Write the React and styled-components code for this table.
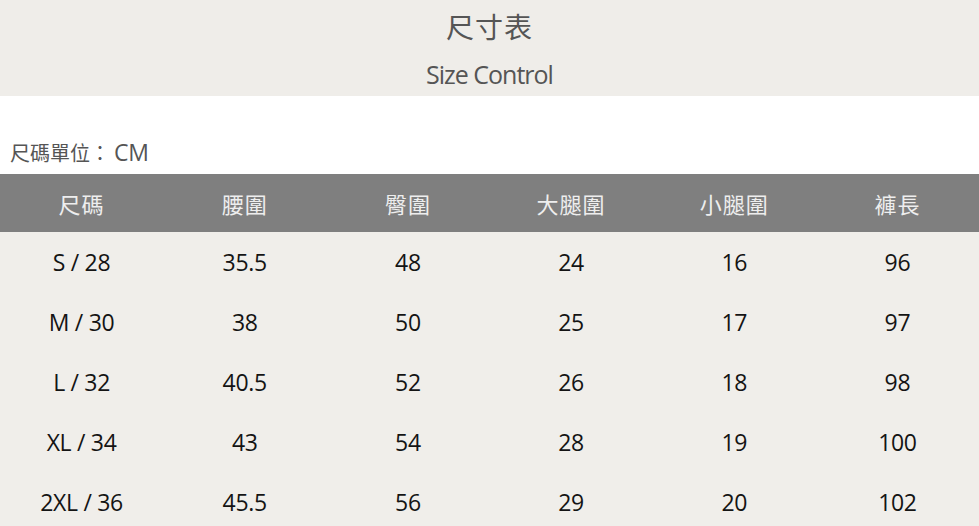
import styled, { createGlobalStyle } from "styled-components";

const GlobalStyle = createGlobalStyle`
  html, body {
    margin: 0;
    padding: 0;
    background: #ffffff;
  }
  body {
    font-family: "Open Sans", "Noto Sans CJK TC", sans-serif;
    overflow: hidden;
  }
`;

const Page = styled.div`
  width: 979px;
  display: flex;
  flex-direction: column;
`;

const Banner = styled.header`
  height: 96px;
  background: #efede9;
  display: flex;
  flex-direction: column;
  align-items: center;
  color: #555555;
`;

const Title = styled.h1`
  margin: 7px 0 0;
  font-family: "Noto Sans CJK TC", sans-serif;
  font-weight: 400;
  font-size: 28px;
  line-height: 38px;
  letter-spacing: 1px;
`;

const Subtitle = styled.div`
  margin-top: 14px;
  font-family: "Open Sans", sans-serif;
  font-size: 25px;
  line-height: 30px;
  letter-spacing: -1px;
`;

const Unit = styled.div`
  margin: 43px 0 0 10px;
  height: 35px;
  font-family: "Open Sans", "Noto Sans CJK TC", sans-serif;
  font-size: 20px;
  line-height: 26px;
  color: #555555;

  span {
    margin-left: 4px;
    font-size: 23px;
    letter-spacing: -0.3px;
  }
`;

const Table = styled.div`
  display: grid;
  grid-template-columns: repeat(6, 1fr);
`;

const HeadCell = styled.div`
  height: 58px;
  background: #7f7f7f;
  color: #eeeeee;
  display: flex;
  align-items: center;
  justify-content: center;
  font-family: "Noto Sans CJK TC", sans-serif;
  font-size: 22px;
  letter-spacing: 1px;
`;

const Cell = styled.div`
  height: 60px;
  background: #f0eeea;
  color: #141414;
  display: flex;
  align-items: center;
  justify-content: center;
  font-family: "Open Sans", sans-serif;
  font-weight: 500;
  font-size: 23px;
  letter-spacing: -0.3px;
`;

const headers = ["尺碼", "腰圍", "臀圍", "大腿圍", "小腿圍", "褲長"];

const rows = [
  ["S / 28", "35.5", "48", "24", "16", "96"],
  ["M / 30", "38", "50", "25", "17", "97"],
  ["L / 32", "40.5", "52", "26", "18", "98"],
  ["XL / 34", "43", "54", "28", "19", "100"],
  ["2XL / 36", "45.5", "56", "29", "20", "102"],
];

export default function App() {
  return (
    <Page>
      <GlobalStyle />
      <Banner>
        <Title>尺寸表</Title>
        <Subtitle>Size Control</Subtitle>
      </Banner>
      <Unit>
        尺碼單位：<span>CM</span>
      </Unit>
      <Table>
        {headers.map((h) => (
          <HeadCell key={h}>{h}</HeadCell>
        ))}
        {rows.map((row) =>
          row.map((value, i) => <Cell key={row[0] + i}>{value}</Cell>)
        )}
      </Table>
    </Page>
  );
}
